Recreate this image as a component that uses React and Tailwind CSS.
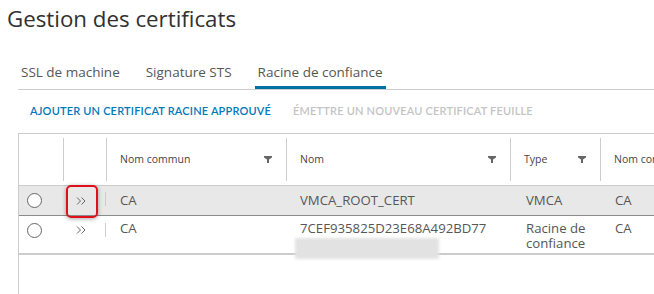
const COLS = [
  { key: "radio", w: "w-[44px]" },
  { key: "expand", w: "w-[43px]" },
  { key: "cn", w: "w-[180px]", label: "Nom commun", filter: true },
  { key: "name", w: "w-[224px]", label: "Nom", filter: true },
  { key: "type", w: "w-[90px]", label: "Type", filter: true },
  { key: "issuer", w: "w-[120px]", label: "Nom commun" },
];

function FilterIcon() {
  return (
    <svg width="8" height="7" viewBox="0 0 8 7" className="shrink-0">
      <path d="M0 0H8V1.5L5 3.5V7H3V3.5L0 1.5Z" fill="#666" />
    </svg>
  );
}

function Radio() {
  return <span className="block w-[15px] h-[15px] rounded-full border border-[#666] bg-white" />;
}

function Chevrons() {
  return (
    <svg width="11" height="10" viewBox="0 0 11 10">
      <path d="M1 1.5L4.5 5L1 8.5M5.5 1.5L9 5L5.5 8.5" fill="none" stroke="#666" strokeWidth="1" />
    </svg>
  );
}

export default function App() {
  return (
    <div className="w-[654px] h-[294px] overflow-hidden bg-white font-['Open_Sans',sans-serif] text-[#565656]">
      <h1 className="pl-[7px] pt-[3px] text-[22.3px] leading-[32px] text-[#313131]">
        Gestion des certificats
      </h1>

      {/* Tabs */}
      <div className="ml-[18px] mt-[20px] flex border-b border-[#ccc] text-[13.5px]">
        <div className="h-[34px] flex items-center px-[3px] mr-[20px]">SSL de machine</div>
        <div className="h-[34px] flex items-center px-[3px] mr-[20px]">Signature STS</div>
        <div className="h-[34px] flex items-center px-[3px] border-b-[3px] border-[#0072a3] pt-[3px]">
          Racine de confiance
        </div>
      </div>

      {/* Actions */}
      <div className="ml-[30px] h-[43px] flex items-center gap-[22px] text-[11px] tracking-[0.18px] uppercase font-['Lato',sans-serif] font-semibold">
        <span className="text-[#0079b8]">Ajouter un certificat racine approuvé</span>
        <span className="text-[#c4c4c4]">Émettre un nouveau certificat feuille</span>
      </div>

      {/* Table */}
      <div className="ml-[18px] w-[720px] h-[200px] border-l border-t border-[#ccc] bg-white text-[13.2px]">
        <div className="flex h-[52px] border-b border-[#ccc] text-[10.5px] text-[#454545]">
          {COLS.map((c, i) => (
            <div
              key={c.key}
              className={`${c.w} shrink-0 flex items-center my-[4px] ${i > 0 ? "border-l border-[#ccc]" : ""} pl-[13px] pr-[14px] justify-between`}
            >
              {c.label && <span className="font-medium">{c.label}</span>}
              {c.filter && <FilterIcon />}
            </div>
          ))}
        </div>

        {/* Row 1 */}
        <div className="flex h-[30px] bg-[#e8e8e8] border-b border-[#8c8c8c] items-center">
          <div className="w-[44px] shrink-0 flex pl-[8px]"><Radio /></div>
          <div className="w-[43px] shrink-0 flex pl-[13px] relative h-full items-center">
            <Chevrons />
            <span className="absolute left-[3px] top-[-1px] w-[32px] h-[33px] rounded-[5px] border-2 border-[#e0101a] shadow-[0_1px_4px_rgba(0,0,0,0.35)]" />
            <span className="absolute right-0 top-[6px] h-[14px] border-l border-[#ccc]" />
          </div>
          <div className="w-[180px] shrink-0 px-[14px]">CA</div>
          <div className="w-[224px] shrink-0 px-[14px]">VMCA_ROOT_CERT</div>
          <div className="w-[90px] shrink-0 pl-[16px]">VMCA</div>
          <div className="w-[120px] shrink-0 pl-[15px]">CA</div>
        </div>

        {/* Row 2 */}
        <div className="flex h-[39px] border-b-2 border-[#ccc] pt-[5px] leading-[15px] relative">
          <div className="w-[44px] shrink-0 flex pl-[8px] pt-[2px]"><Radio /></div>
          <div className="w-[43px] shrink-0 flex pl-[13px] relative pt-[4px]">
            <Chevrons />
            <span className="absolute right-0 top-[2px] h-[14px] border-l border-[#ccc]" />
          </div>
          <div className="w-[180px] shrink-0 px-[14px]">CA</div>
          <div className="w-[224px] shrink-0 px-[14px]">
            <div>7CEF935825D23E68A492BD77</div>
            <div className="ml-[-5px] mt-[2px] w-[144px] h-[21px] bg-[#e2e2e2] blur-[1.5px]" />
          </div>
          <div className="w-[90px] shrink-0 pl-[16px] pr-[2px]">
            <div>Racine de</div>
            <div>confiance</div>
          </div>
          <div className="w-[120px] shrink-0 pl-[15px]">CA</div>
        </div>
      </div>
    </div>
  );
}
